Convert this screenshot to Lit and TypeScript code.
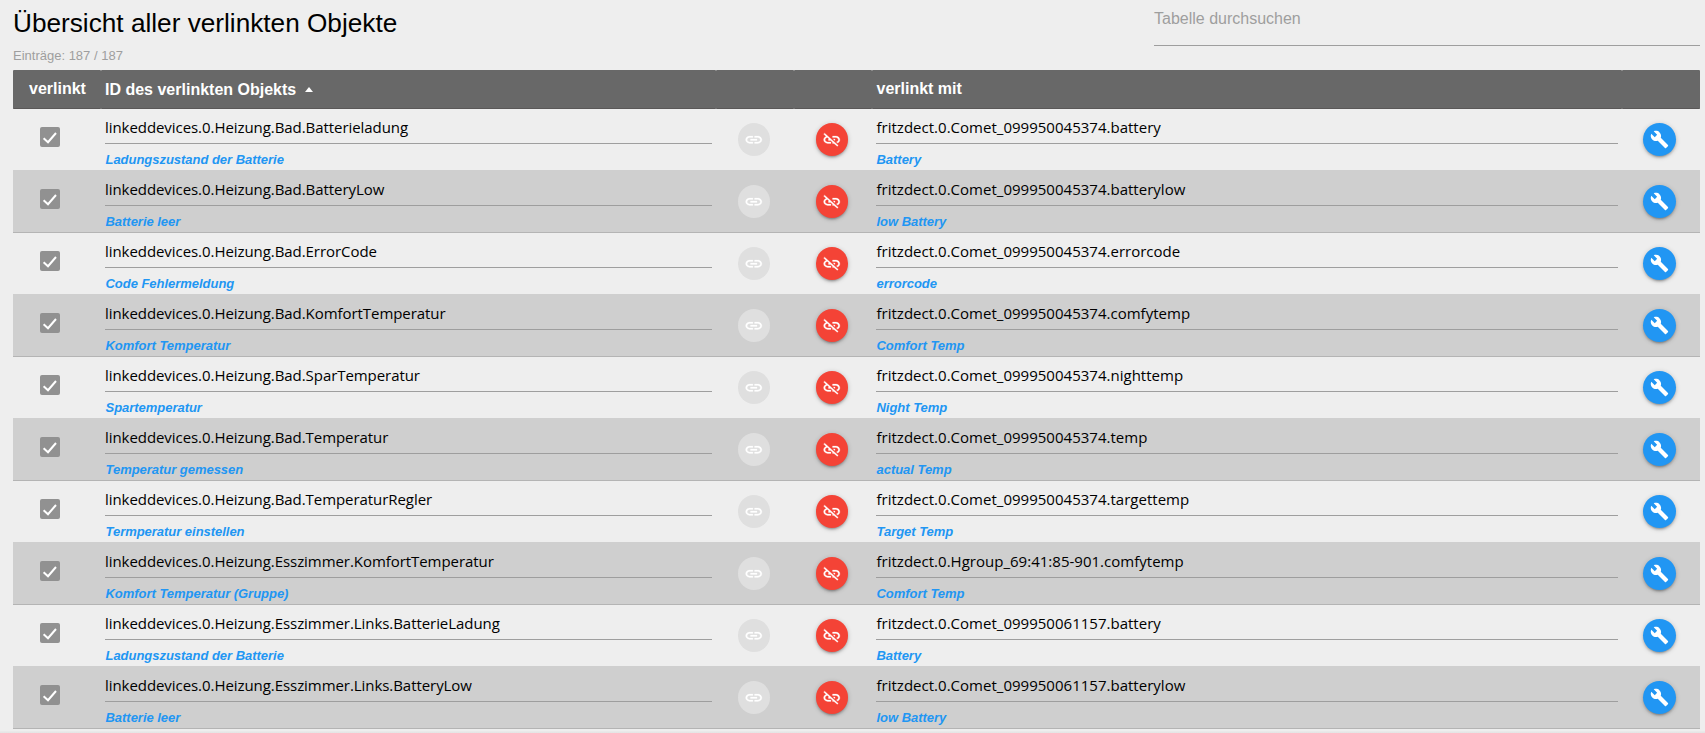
import { LitElement, html, css, svg } from "lit";
import { customElement, property } from "lit/decorators.js";

interface Link {
  id: string;
  name: string;
  target: string;
  targetName: string;
}

const DEV = "linkeddevices.0.Heizung.";
const row = (id: string, name: string, target: string, targetName: string): Link => ({
  id: DEV + id,
  name,
  target: "fritzdect.0." + target,
  targetName,
});

const LINKS: Link[] = [
  row("Bad.Batterieladung", "Ladungszustand der Batterie", "Comet_099950045374.battery", "Battery"),
  row("Bad.BatteryLow", "Batterie leer", "Comet_099950045374.batterylow", "low Battery"),
  row("Bad.ErrorCode", "Code Fehlermeldung", "Comet_099950045374.errorcode", "errorcode"),
  row("Bad.KomfortTemperatur", "Komfort Temperatur", "Comet_099950045374.comfytemp", "Comfort Temp"),
  row("Bad.SparTemperatur", "Spartemperatur", "Comet_099950045374.nighttemp", "Night Temp"),
  row("Bad.Temperatur", "Temperatur gemessen", "Comet_099950045374.temp", "actual Temp"),
  row("Bad.TemperaturRegler", "Termperatur einstellen", "Comet_099950045374.targettemp", "Target Temp"),
  row("Esszimmer.KomfortTemperatur", "Komfort Temperatur (Gruppe)", "Hgroup_69:41:85-901.comfytemp", "Comfort Temp"),
  row("Esszimmer.Links.BatterieLadung", "Ladungszustand der Batterie", "Comet_099950061157.battery", "Battery"),
  row("Esszimmer.Links.BatteryLow", "Batterie leer", "Comet_099950061157.batterylow", "low Battery"),
];

const ICONS = {
  link: svg`<path d="M3.9 12c0-1.71 1.39-3.1 3.1-3.1h4V7H7c-2.76 0-5 2.24-5 5s2.24 5 5 5h4v-1.9H7c-1.71 0-3.1-1.39-3.1-3.1zM8 13h8v-2H8v2zm9-6h-4v1.9h4c1.71 0 3.1 1.39 3.1 3.1s-1.39 3.1-3.1 3.1h-4V17h4c2.76 0 5-2.24 5-5s-2.24-5-5-5z"/>`,
  unlink: svg`<path d="M17 7h-4v1.9h4c1.71 0 3.1 1.39 3.1 3.1 0 1.43-.98 2.63-2.31 2.98l1.46 1.46C20.88 15.61 22 13.95 22 12c0-2.76-2.24-5-5-5zm-1 4h-2.19l2 2H16zM2 4.27l3.11 3.11C3.29 8.12 2 9.91 2 12c0 2.76 2.24 5 5 5h4v-1.9H7c-1.71 0-3.1-1.39-3.1-3.1 0-1.59 1.21-2.9 2.76-3.07L8.73 11H8v2h2.73L13 15.27V17h1.73l4.01 4L20 19.74 3.27 3 2 4.27z"/>`,
  build: svg`<path d="M22.7 19l-9.1-9.1c.9-2.3.4-5-1.5-6.9-2-2-5-2.4-7.4-1.3L9 6 6 9 1.6 4.7C.4 7.1.9 10.1 2.9 12.1c1.9 1.9 4.6 2.4 6.9 1.5l9.1 9.1c.4.4 1 .4 1.4 0l2.3-2.3c.5-.4.5-1.1.1-1.4z"/>`,
};

@customElement("round-button")
class RoundButton extends LitElement {
  @property() icon: keyof typeof ICONS = "link";
  static styles = css`
    :host { display: block; }
    .btn {
      display: flex; align-items: center; justify-content: center;
      box-sizing: border-box; width: 32.4px; height: 32.8px; padding: 0; border: 0;
      border-radius: 50%;
      box-shadow: 0 2px 2px 0 rgba(0,0,0,.14), 0 3px 1px -2px rgba(0,0,0,.12), 0 1px 5px 0 rgba(0,0,0,.2);
    }
    .link { background: #dfdfdf; box-shadow: none; }
    .unlink { background: #f44336; }
    .build { background: #2196f3; width: 33px; height: 33px; }
    svg { display: block; width: 19px; height: 19px; fill: #fff; }
    .link svg, .unlink svg { width: 19.5px; height: 17.5px; stroke: #fff; stroke-width: .35px; }
    .link svg { fill: #fff; }
  `;
  render() {
    return html`<button class="btn ${this.icon}"><svg viewBox="0 0 24 24" preserveAspectRatio="none">${ICONS[this.icon]}</svg></button>`;
  }
}

@customElement("app-root")
class AppRoot extends LitElement {
  static styles = css`
    :host {
      display: block; box-sizing: border-box; height: 733px; overflow: hidden;
      background: #eee; color: #000;
      font-family: "Liberation Sans", Arial, sans-serif;
    }
    .page { height: 731px; padding: 0 5px 0 13px; }
    .edge { height: 2px; background: linear-gradient(#ebebeb, #e4e4e4); }
    .top { display: flex; justify-content: space-between; height: 70px; }
    h1 { margin: 7px 0 0; font-size: 26.2px; line-height: 32px; font-weight: 400; white-space: nowrap; }
    .count { margin-top: 9px; font-size: 13px; line-height: 16px; color: #9e9e9e; }
    .search {
      width: 546px; height: 46px; box-sizing: border-box; border-bottom: 1px solid #9e9e9e;
      font-size: 16px; line-height: 38px; color: #9e9e9e;
    }
    .grid { display: grid; grid-template-columns: 88px 615px 78px 78px 750px 78px; }
    .head { height: 39px; color: #fff; font-weight: 700; font-size: 16px; line-height: 37px; }
    .head span {
      box-sizing: border-box; height: 39px; padding-left: 4.5px; background: #686868;
      border-bottom: 1px solid #5a5858; border-radius: 1px;
    }
    .head .c { padding: 0 0 0 1px; text-align: center; }
    .head .id { display: flex; align-items: center; line-height: 39px; padding-left: 4px; }
    .arrow {
      margin: 0 0 0 9px; border: 4px solid transparent; border-top: 0; border-bottom: 5px solid #fff;
    }
    .row { height: 62px; box-sizing: border-box; border-bottom: 1px solid rgba(0,0,0,.13); }
    .row:nth-child(odd) { background: #cfcfcf; }
    .check { padding: 18px 0 0 27px; }
    .check svg { display: block; width: 20px; height: 20px; }
    .cell { padding: 0 4px; }
    .field {
      height: 35px; box-sizing: border-box; border-bottom: 1px solid #9e9e9e;
      font-family: "Open Sans", "Noto Sans", sans-serif; font-size: 15px; line-height: 37px;
      letter-spacing: -.06px; white-space: nowrap;
    }
    .target .field { letter-spacing: .015px; text-indent: .5px; }
    .name {
      margin-top: 8px; padding-left: .5px; font-size: 13px; line-height: 16px; font-weight: 700;
      font-style: italic; letter-spacing: -.03px; color: #2196f3;
    }
    .act { padding: 14px 0 0 21.8px; }
    .act.last { padding-left: 21px; }
  `;

  render() {
    return html`
      <div class="page">
        <div class="top">
          <div>
            <h1>Übersicht aller verlinkten Objekte</h1>
            <div class="count">Einträge: 187 / 187</div>
          </div>
          <div class="search">Tabelle durchsuchen</div>
        </div>
        <div>
          <div class="grid head">
            <span class="c">verlinkt</span>
            <span class="id">ID des verlinkten Objekts<i class="arrow"></i></span>
            <span></span><span></span>
            <span>verlinkt mit</span>
            <span></span>
          </div>
          ${LINKS.map((l) => html`
            <div class="grid row">
              <div class="check">
                <svg viewBox="0 0 20 20">
                  <rect width="20" height="20" rx="2" fill="#919191" />
                  <path d="M3.6 11.2 8 15.2 16 6" fill="none" stroke="#fff" stroke-width="2" />
                </svg>
              </div>
              <div class="cell"><div class="field">${l.id}</div><div class="name">${l.name}</div></div>
              <div class="act"><round-button icon="link"></round-button></div>
              <div class="act"><round-button icon="unlink"></round-button></div>
              <div class="cell target"><div class="field">${l.target}</div><div class="name">${l.targetName}</div></div>
              <div class="act last"><round-button icon="build"></round-button></div>
            </div>`)}
        </div>
      </div>
      <div class="edge"></div>
    `;
  }
}
